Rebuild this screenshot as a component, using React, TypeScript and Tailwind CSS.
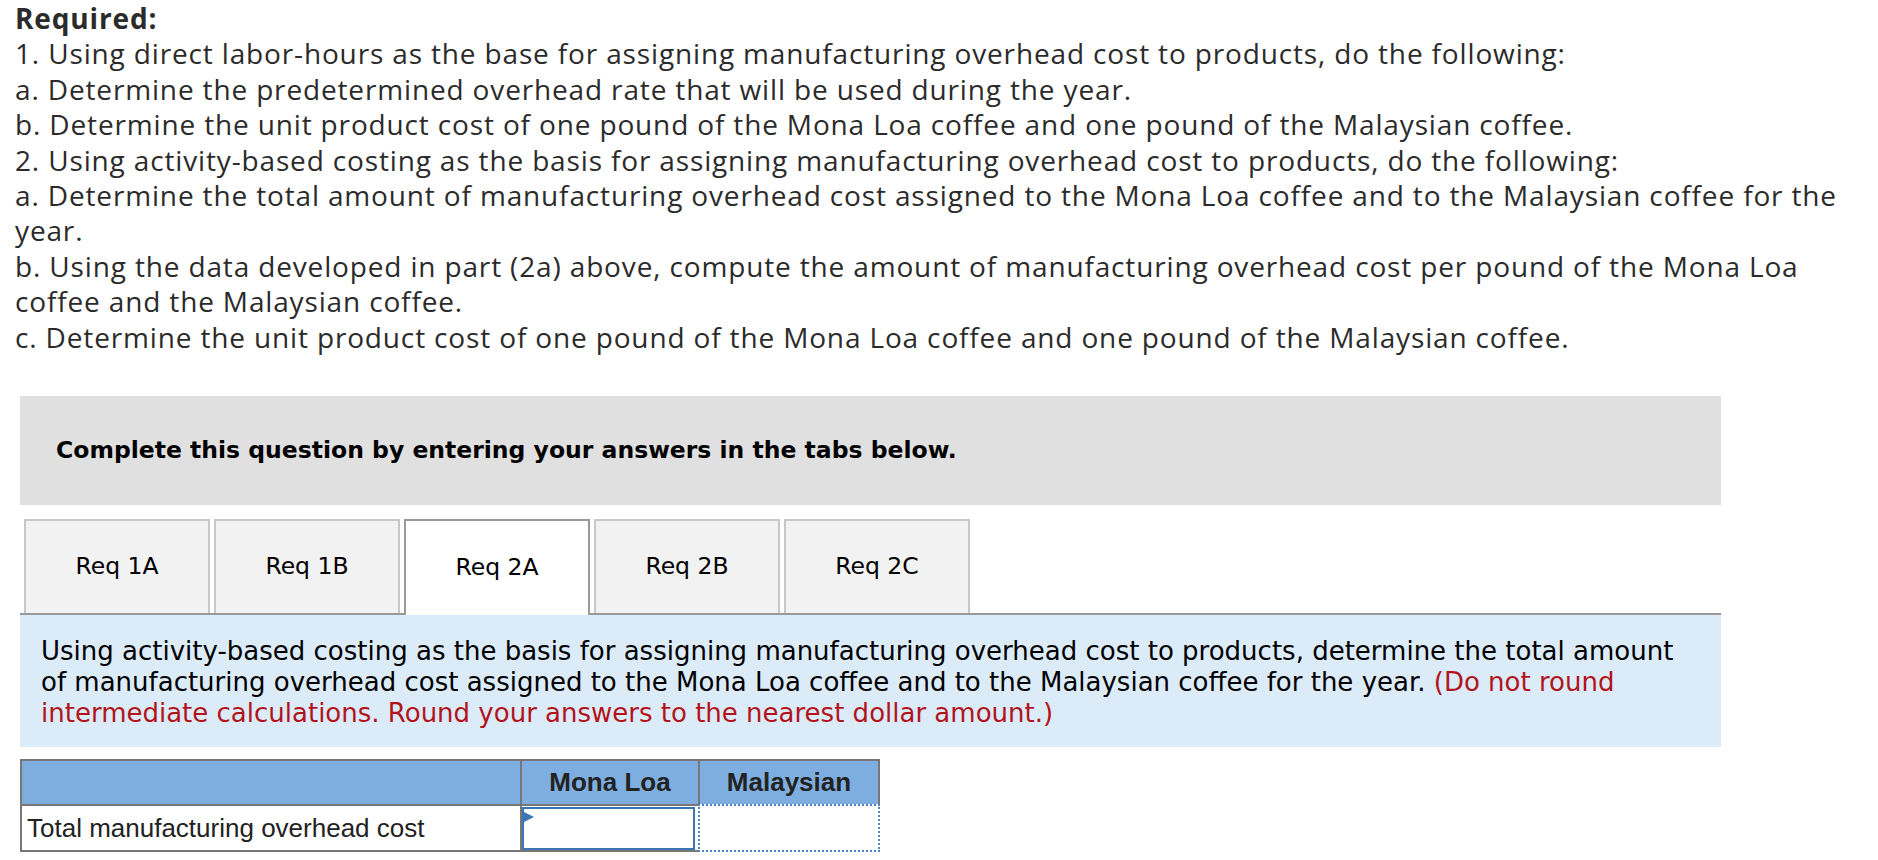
import React from "react";

const topFont = { fontFamily: "'Open Sans', Lato, sans-serif" };

export default function App() {
  const lines = [
    "1. Using direct labor-hours as the base for assigning manufacturing overhead cost to products, do the following:",
    "a. Determine the predetermined overhead rate that will be used during the year.",
    "b. Determine the unit product cost of one pound of the Mona Loa coffee and one pound of the Malaysian coffee.",
    "2. Using activity-based costing as the basis for assigning manufacturing overhead cost to products, do the following:",
    "a. Determine the total amount of manufacturing overhead cost assigned to the Mona Loa coffee and to the Malaysian coffee for the",
    "year.",
    "b. Using the data developed in part (2a) above, compute the amount of manufacturing overhead cost per pound of the Mona Loa",
    "coffee and the Malaysian coffee.",
    "c. Determine the unit product cost of one pound of the Mona Loa coffee and one pound of the Malaysian coffee.",
  ];
  const tabs = ["Req 1A", "Req 1B", "Req 2A", "Req 2B", "Req 2C"];
  return (
    <div className="w-[1878px] h-[860px] bg-white overflow-hidden">
      <div
        className="pl-[15px] pt-[1px] text-[28px] leading-[35.4px] tracking-[0.85px] text-[#2b2b2b] whitespace-nowrap"
        style={topFont}
      >
        <div className="font-bold">Required:</div>
        {lines.map((l, i) => (
          <div key={i}>{l}</div>
        ))}
      </div>

      <div
        className="ml-[20px] mt-[41px] w-[1701px]"
        style={{ fontFamily: "'DejaVu Sans', Verdana, sans-serif" }}
      >
        <div className="h-[109px] bg-[#e0e0e0] pl-[36px] flex items-center">
          <span className="text-[23.5px] font-bold text-black">
            Complete this question by entering your answers in the tabs below.
          </span>
        </div>

        <div className="mt-[14px] flex gap-[4px] pl-[4px] border-b-2 border-[#999]">
          {tabs.map((t, i) => (
            <div
              key={t}
              className={
                i === 2
                  ? "w-[186px] h-[96px] -mb-[2px] bg-white border-2 border-b-0 border-[#999] flex items-center justify-center text-[23.5px] text-black"
                  : "w-[186px] h-[94px] bg-[#f2f2f2] border-2 border-b-0 border-[#c8c8c8] flex items-center justify-center text-[23.5px] text-black"
              }
            >
              {t}
            </div>
          ))}
        </div>

        <div className="bg-[#dbebf8] pl-[21px] pt-[21px] pb-[18px] text-[26px] leading-[31px] text-black whitespace-nowrap">
          <div>
            Using activity-based costing as the basis for assigning manufacturing overhead cost to products, determine the total amount
          </div>
          <div>
            of manufacturing overhead cost assigned to the Mona Loa coffee and to the Malaysian coffee for the year.{" "}
            <span className="text-[#b3141c]">(Do not round</span>
          </div>
          <div className="text-[#b3141c]">
            intermediate calculations. Round your answers to the nearest dollar amount.)
          </div>
        </div>
      </div>

      <div
        className="ml-[20px] mt-[12px] w-[860px] border-t-2 border-l-2 border-[#777] grid grid-cols-[500px_178px_180px]"
        style={{ fontFamily: "'Liberation Sans', Arial, sans-serif" }}
      >
        <div className="h-[45px] bg-[#7daedf] border-r-2 border-b-2 border-[#777]" />
        <div className="h-[45px] bg-[#7daedf] border-r-2 border-b-2 border-[#777] flex items-center justify-center text-[26px] font-bold text-[#222]">
          Mona Loa
        </div>
        <div className="h-[45px] bg-[#7daedf] border-r-2 border-b-2 border-[#777] flex items-center justify-center text-[26px] font-bold text-[#222]">
          Malaysian
        </div>

        <div className="h-[46px] bg-white border-r-2 border-b-2 border-[#777] flex items-center pl-[5px] text-[26px] text-[#222]">
          Total manufacturing overhead cost
        </div>
        <div className="h-[46px] bg-white border-r-2 border-b-2 border-[#777] pt-[1px] pr-[3px] pb-[0px]">
          <div className="relative h-full w-full border-2 border-[#3a75b4] bg-white">
            <svg
              className="absolute left-0 top-[3px]"
              width="10"
              height="10"
              viewBox="0 0 10 10"
            >
              <polygon points="0,0 10,5 0,10" fill="#3a75b4" />
            </svg>
          </div>
        </div>
        <div className="relative -mt-[2px] -ml-[2px] h-[48px] w-[182px] bg-white border-2 border-dotted border-[#4a86c5]" />
      </div>
    </div>
  );
}
